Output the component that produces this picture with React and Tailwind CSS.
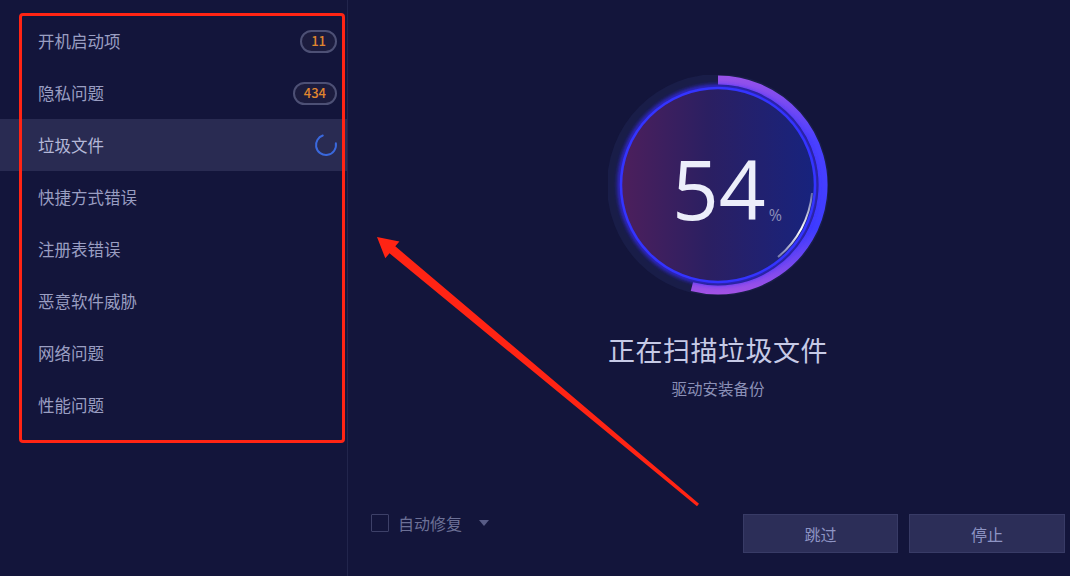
import React from "react";

const items = [
  { label: "开机启动项", badge: "11" },
  { label: "隐私问题", badge: "434" },
  { label: "垃圾文件", spinner: true },
  { label: "快捷方式错误" },
  { label: "注册表错误" },
  { label: "恶意软件威胁" },
  { label: "网络问题" },
  { label: "性能问题" },
];

const font = { fontFamily: '"Noto Sans CJK SC", "Noto Sans", sans-serif' };

function Ring() {
  return (
    <div className="relative w-[220px] h-[220px]">
      <svg width="220" height="220" viewBox="0 0 220 220" className="absolute inset-0">
        <defs>
          <linearGradient id="arcg" gradientUnits="userSpaceOnUse" x1="0" y1="0" x2="0" y2="220">
            <stop offset="0%" stopColor="#9a52e8" />
            <stop offset="30%" stopColor="#4a40ff" />
            <stop offset="70%" stopColor="#3e3cff" />
            <stop offset="100%" stopColor="#a452e4" />
          </linearGradient>
          <linearGradient id="discg" x1="0" y1="0" x2="1" y2="0">
            <stop offset="0%" stopColor="#4d1f5c" />
            <stop offset="45%" stopColor="#2b1f62" />
            <stop offset="100%" stopColor="#17237e" />
          </linearGradient>
          <linearGradient id="hl" gradientUnits="userSpaceOnUse" x1="0" y1="100" x2="0" y2="200">
            <stop offset="0%" stopColor="#ffffff" stopOpacity="0" />
            <stop offset="55%" stopColor="#ffffff" stopOpacity="1" />
            <stop offset="100%" stopColor="#ffffff" stopOpacity="0" />
          </linearGradient>
          <filter id="glow" x="-20%" y="-20%" width="140%" height="140%">
            <feGaussianBlur stdDeviation="2" />
          </filter>
        </defs>
        <circle cx="110" cy="110" r="105" fill="none" stroke="#191d48" strokeWidth="12" />
        <path
          d="M 110 5 A 105 105 0 1 1 83.9 211.7"
          fill="none"
          stroke="url(#arcg)"
          strokeWidth="9"
        />
        <circle cx="110" cy="110" r="98" fill="none" stroke="#3a2cff" strokeWidth="4" filter="url(#glow)" />
        <circle cx="110" cy="110" r="97" fill="url(#discg)" stroke="#3434ff" strokeWidth="2.5" />
        <path d="M 204 118 A 94 94 0 0 1 170 182" fill="none" stroke="url(#hl)" strokeWidth="2" />
      </svg>
      <div className="absolute inset-0 flex items-center justify-center">
        <div className="flex items-end pl-[18px] pt-[6px]">
          <span
            className="text-[82px] leading-none font-normal text-[#eceefa]"
            style={{ fontFamily: '"Open Sans", sans-serif' }}
          >
            54
          </span>
          <span
            className="text-[16px] leading-none text-[#8d90b8] ml-[3px] mb-[6px]"
            style={{ fontFamily: '"Open Sans", sans-serif' }}
          >
            %
          </span>
        </div>
      </div>
    </div>
  );
}

function Spinner() {
  return (
    <svg width="24" height="24" viewBox="0 0 24 24">
      <circle
        cx="12"
        cy="12"
        r="10"
        fill="none"
        stroke="#3a68dc"
        strokeWidth="2"
        strokeDasharray={`${2 * Math.PI * 10 * 0.72} 100`}
        transform="rotate(-10 12 12)"
        strokeLinecap="round"
      />
    </svg>
  );
}

export default function App() {
  return (
    <div className="relative w-[1070px] h-[576px] bg-[#13153b] flex overflow-hidden" style={font}>
      <aside className="w-[348px] shrink-0 border-r border-[#22254c] pt-[15px] flex flex-col">
        {items.map((it) => (
          <div
            key={it.label}
            className={`h-[52px] flex items-center justify-between pl-[38px] pr-[10px] ${
              it.spinner ? "bg-[#292b52]" : ""
            }`}
          >
            <span className={`text-[16.5px] ${it.spinner ? "text-[#b4b8d8]" : "text-[#9a9ec2]"}`}>
              {it.label}
            </span>
            {it.badge && (
              <span className="h-[23px] px-[9px] flex items-center rounded-full border-2 border-[#4d5075] bg-[#1c1c3e] text-[13px] font-medium text-[#e0862e]">
                {it.badge}
              </span>
            )}
            {it.spinner && (
              <span className="mr-[-1px]">
                <Spinner />
              </span>
            )}
          </div>
        ))}
      </aside>

      <main className="flex-1 flex flex-col">
        <div className="flex flex-col items-center pt-[75px] pl-[18px]">
          <Ring />
          <div className="mt-[38px] text-[27px] leading-[34px] text-[#c6cae6] tracking-[0.5px]">
            正在扫描垃圾文件
          </div>
          <div className="mt-[11px] text-[15.5px] leading-[20px] text-[#8b90b6]">驱动安装备份</div>
        </div>

        <div className="mt-auto flex items-start justify-between pl-[23px] pr-[5px] pb-[23px]">
          <div className="flex items-center h-[20px] mt-[-1px]">
            <span className="w-[18px] h-[18px] border border-[#3d4068] rounded-[1px]" />
            <span className="ml-[9px] text-[16px] text-[#6c7096]">自动修复</span>
            <span className="ml-[17px] w-0 h-0 border-l-[5px] border-r-[5px] border-t-[6px] border-l-transparent border-r-transparent border-t-[#585c86]" />
          </div>
          <div className="flex gap-[11px]">
            <button className="w-[155px] h-[39px] bg-[#2c2e58] border border-[#383b66] text-[16px] text-[#8e94c4]">
              跳过
            </button>
            <button className="w-[156px] h-[39px] bg-[#2c2e58] border border-[#383b66] text-[16px] text-[#8e94c4]">
              停止
            </button>
          </div>
        </div>
      </main>

      {/* annotation overlay */}
      <div className="absolute left-[19px] top-[13px] w-[326px] h-[430px] border-[3px] border-[#ff2414] rounded-[4px] pointer-events-none" />
      <svg
        className="absolute inset-0 pointer-events-none"
        width="1070"
        height="576"
        viewBox="0 0 1070 576"
      >
        <polygon
          fill="#ff2414"
          points="377,237 399.4,241.4 395.3,246.3 699,503.8 697,506.2 389.5,253.3 385.3,258.3"
        />
      </svg>
    </div>
  );
}
